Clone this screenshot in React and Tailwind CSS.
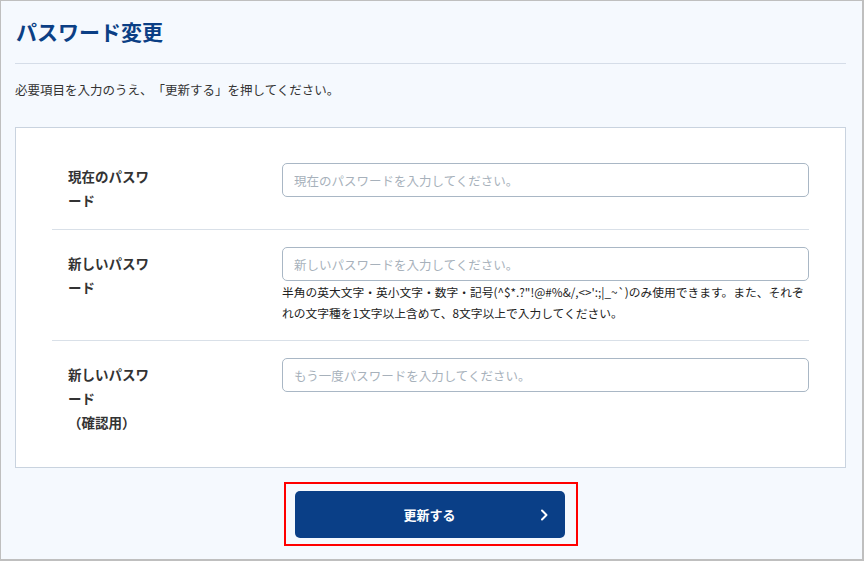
import React from "react";

function Row({ label, placeholder, help, first, last }) {
  return (
    <div className={`flex py-[17px] ${last ? "" : "border-b border-[#d9e0e8]"}`}>
      <div className="w-[230px] shrink-0 pl-4">
        <div className={`w-[90px] text-[13.5px] font-bold leading-6 text-[#333] ${first ? "pt-[1px]" : "pt-[4px]"}`}>
          {label}
        </div>
      </div>
      <div className="flex-1">
        <input
          type="password"
          placeholder={placeholder}
          className="block h-[34px] w-full rounded-[5px] border border-[#a9b7c5] bg-white px-[11px] text-[12.5px] text-[#333] outline-none placeholder:text-[#a7b1bb]"
        />
        {help && (
          <p className="text-[11.75px] leading-[21px] text-[#222]">{help}</p>
        )}
      </div>
    </div>
  );
}

export default function App() {
  return (
    <div
      className="h-[561px] w-[864px] overflow-hidden border-l border-t border-r-2 border-b-2 border-[#bfbfbf] bg-[#f5f9fe] pl-[14px] pr-[16px] pt-[15px] [text-spacing-trim:space-all]"
      style={{ fontFamily: '"Noto Sans CJK JP", "Noto Sans", sans-serif' }}
    >
      <h1 className="pl-[1px] text-[21px] font-bold leading-[30px] text-[#0b3f85]">
        パスワード変更
      </h1>
      <div className="mt-[17px] h-px bg-[#d5dde8]" />
      <p className="mt-[17px] text-[12.5px] leading-[18px] text-[#333]">
        必要項目を入力のうえ、「更新する」を押してください。
      </p>
      <div className="mt-[28px] border border-[#c9d3df] bg-white px-[36px] pb-[16px] pt-[18px]">
        <Row
          first
          label="現在のパスワード"
          placeholder="現在のパスワードを入力してください。"
        />
        <Row
          label="新しいパスワード"
          placeholder="新しいパスワードを入力してください。"
          help={"半角の英大文字・英小文字・数字・記号(^$*.?\"!@#%&/,<>':;|_~`)のみ使用できます。また、それぞれの文字種を1文字以上含めて、8文字以上で入力してください。"}
        />
        <Row
          last
          label={
            <>
              新しいパスワード
              <br />
              （確認用）
            </>
          }
          placeholder="もう一度パスワードを入力してください。"
        />
      </div>
      <div className="mt-[14px] flex justify-center">
        <div className="border-2 border-[#ff0000] pb-[6px] pl-[9px] pr-[11px] pt-[7px]">
          <button
            type="button"
            className="relative flex h-[47px] w-[270px] items-center justify-center rounded-[5px] bg-[#0a3f87] text-[13px] font-bold text-white"
          >
            更新する
            <svg
              className="absolute right-[16px] top-1/2 -translate-y-1/2"
              width="10"
              height="14"
              viewBox="0 0 10 14"
              fill="none"
            >
              <path d="M3 2.5 L7.5 7 L3 11.5" stroke="white" strokeWidth="2" strokeLinecap="round" strokeLinejoin="round" />
            </svg>
          </button>
        </div>
      </div>
    </div>
  );
}
